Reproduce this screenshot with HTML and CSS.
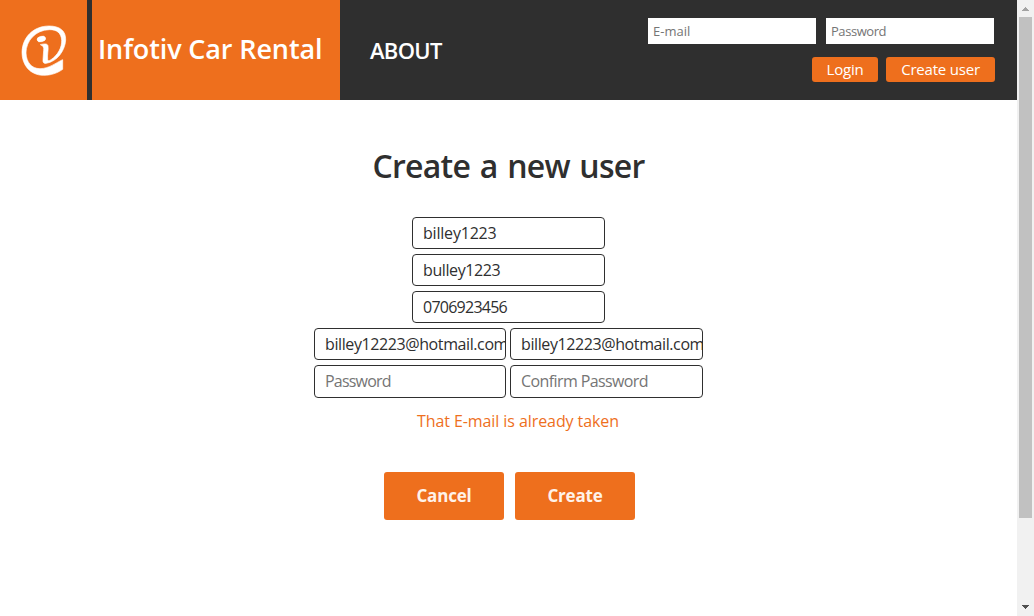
FILE: index.html
```html
<!DOCTYPE html>
<html lang="en">
<head>
<meta charset="utf-8">
<title>Infotiv Car Rental</title>
<link rel="stylesheet" href="styles.css">
</head>
<body>
<div class="page">
  <header class="header">
    <div class="logo">
      <svg viewBox="0 0 261 300" width="87" height="100" aria-hidden="true">
        <g fill="#fff" stroke="#fff" stroke-width="2">
          <path fill-rule="evenodd" d="M188 179V208C171 220 152 226 131 226C91 226 66 196 66 157C67 111 101 78 147 78C180 78 198 93 197 120C195 152 172 184 139 190C131 191 128 187 129 179L131 151C132 142 130 138 121 134C132 131 143 130 144 138C146 150 141 164 143 179C144 184 148 182 153 179C174 165 186 142 185 121C184 99 170 88 148 89C107 90 78 122 78 159C79 186 94 206 120 206C147 206 168 188 188 179Z"/>
          <ellipse cx="124" cy="117" rx="13" ry="8" transform="rotate(-14 124 117)"/>
        </g>
      </svg>
    </div>
    <div class="brand"><h1 class="brand-name">Infotiv Car Rental</h1></div>
    <nav class="nav"><a class="about">ABOUT</a></nav>
    <form class="login">
      <div class="login-fields">
        <input class="login-input" type="text" placeholder="E-mail">
        <input class="login-input" type="password" placeholder="Password">
      </div>
      <div class="login-actions">
        <button class="small-button login-button" type="button">Login</button>
        <button class="small-button register-button" type="button">Create user</button>
      </div>
    </form>
  </header>
  <main class="main">
    <h2 class="title">Create a new user</h2>
    <form class="form">
      <div class="row"><input class="field name" type="text" value="billey1223"></div>
      <div class="row"><input class="field" type="text" value="bulley1223"></div>
      <div class="row"><input class="field phone" type="text" value="0706923456"></div>
      <div class="row"><input class="field narrow" type="text" value="billey12223@hotmail.com"><input class="field" type="text" value="billey12223@hotmail.com"></div>
      <div class="row"><input class="field narrow tall" type="password" placeholder="Password"><input class="field tall" type="password" placeholder="Confirm Password"></div>
      <p class="error">That E-mail is already taken</p>
      <div class="actions">
        <button class="big-button" type="button">Cancel</button>
        <button class="big-button" type="button">Create</button>
      </div>
    </form>
  </main>
</div>
<div class="scrollbar">
  <svg class="arrow" viewBox="0 0 17 17" width="17" height="17"><path fill="#a3a3a3" d="M8 7h1v1h1v1h1v1h1v1H5v-1h1V9h1V8h1z"/></svg>
  <div class="thumb"></div>
  <svg class="arrow arrow-down" viewBox="0 0 17 17" width="17" height="17"><path fill="#505050" d="M5 6h7v1h-1v1h-1v1H9v1H8V9H7V8H6V7H5z"/></svg>
</div>
</body>
</html>
```

FILE: styles.css
```css
* { box-sizing: border-box; }
body {
  margin: 0;
  height: 616px;
  display: flex;
  overflow: hidden;
  background: #fff;
  color: #2f2f2f;
  font-family: "Open Sans", "Noto Sans", sans-serif;
}
.page { width: 1017px; }
.header { display: flex; height: 100px; background: #2f2f2f; color: #fff; }
.logo { width: 87px; height: 100px; margin-right: 5px; background: #ee6f1d; }
.logo svg { display: block; }
.brand { width: 248px; padding: 30px 0 0 6px; background: #ee6f1d; }
.brand-name { margin: 0; font-size: 27px; line-height: 37px; font-weight: 650; letter-spacing: -.12px; white-space: nowrap; }
.nav { padding: 36px 0 0 30px; }
.about { font-size: 22px; line-height: 28px; font-weight: 650; letter-spacing: -.7px; }
.login { margin-left: auto; padding: 18px 22px 0 0; }
.login-fields { display: flex; gap: 10px; padding-right: 1px; }
.login-input {
  width: 168px; height: 26px; padding: 0 5px; border: 0;
  font: 13px "Open Sans", sans-serif; letter-spacing: -.45px;
}
.login-input[type="text"] { letter-spacing: 0; }
.login-actions { display: flex; justify-content: flex-end; gap: 8px; margin-top: 13px; }
.small-button {
  height: 25px; padding: 0; border: 0; border-radius: 3px;
  background: #ee6f1d; color: #fff;
  font: 500 15px/25px "Open Sans", sans-serif; letter-spacing: -.2px;
}
.login-button { width: 66px; }
.register-button { width: 109px; }
.main { padding-top: 45px; text-align: center; }
.title { margin: 0; font-size: 32px; line-height: 42px; font-weight: 650; letter-spacing: -.75px; word-spacing: 2px; }
.form { margin-top: 30px; }
.row { display: flex; justify-content: center; gap: 4px; margin-bottom: 5px; }
.field {
  width: 193px; height: 32px; padding: 0 0 0 10px;
  border: 1px solid #2f2f2f; border-radius: 4px;
  background: #fff; color: #2f2f2f;
  font: 16px "Open Sans", sans-serif; letter-spacing: -.4px;
}
.name { letter-spacing: -.2px; }
.phone { letter-spacing: -.75px; }
.narrow { width: 192px; }
.tall { height: 33px; padding-bottom: 1px; letter-spacing: -.6px; }
.tall.narrow { letter-spacing: -.8px; }
.field::placeholder, .login-input::placeholder { color: #757575; }
.error { margin: 12px 0 0 19px; color: #ee6f1d; font-size: 16px; line-height: 22px; letter-spacing: -.08px; }
.actions { display: flex; justify-content: center; gap: 11px; margin: 40px 0 0 2px; }
.big-button {
  width: 120px; height: 48px; padding: 0; border: 0; border-radius: 3px;
  background: #ee6f1d; color: #fff2e9;
  font: 700 17px/48px "Open Sans", sans-serif; letter-spacing: -.2px;
}
.scrollbar { display: flex; flex-direction: column; width: 17px; height: 616px; background: #f1f1f1; }
.arrow { display: block; flex: none; }
.thumb { width: 13px; height: 501px; margin-left: 2px; background: #c1c1c1; }
.arrow-down { margin-top: auto; }
```
